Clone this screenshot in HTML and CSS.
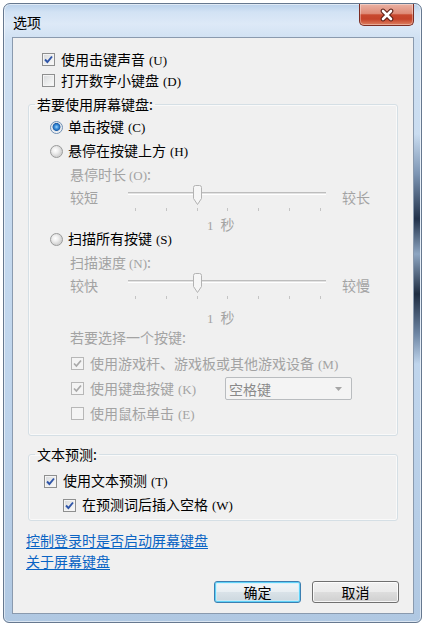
FILE: index.html
```html
<!DOCTYPE html>
<html lang="zh-CN">
<head>
<meta charset="utf-8">
<title>选项</title>
<link rel="stylesheet" href="styles.css">
</head>
<body>
<div class="window">
  <div class="titlebar">
    <span class="title">选项</span>
    <button class="close" aria-label="关闭">
      <svg width="16" height="14" viewBox="0 0 16 14"><path d="M4 3 L12 11 M12 3 L4 11" stroke="#5a1d14" stroke-width="4.6" stroke-linecap="round"/><path d="M4 3 L12 11 M12 3 L4 11" stroke="#ffffff" stroke-width="2.6" stroke-linecap="round"/></svg>
    </button>
  </div>
  <div class="client">
    <div class="top-opts">
      <div class="row r21"><span class="cb"><svg width="11" height="11" viewBox="0 0 11 11"><path d="M2 5.5 L4.4 8 L9 2.5" fill="none" stroke="#2f55a8" stroke-width="1.9"/></svg></span><span class="lbl">使用击键声音<span class="key">(U)</span></span></div>
      <div class="row r21"><span class="cb"></span><span class="lbl">打开数字小键盘<span class="key">(D)</span></span></div>
    </div>

    <fieldset class="group g1">
      <legend>若要使用屏幕键盘:</legend>
      <div class="gbody">
        <div class="row r24"><span class="radio on"></span><span class="lbl">单击按键<span class="key">(C)</span></span></div>
        <div class="row r24"><span class="radio"></span><span class="lbl">悬停在按键上方<span class="key">(H)</span></span></div>
        <div class="sub dis lbl1">悬停时长<span class="key">(O)</span>:</div>
        <div class="sub slider dis">
          <span class="s-end">较短</span>
          <div class="s-track">
            <div class="groove"></div>
            <div class="ticks"><i></i><i></i><i></i><i></i><i></i><i></i><i></i></div>
            <svg class="thumb" width="11" height="21" viewBox="0 0 11 21"><path d="M1.5 2.5 Q1.5 0.5 3.5 0.5 H7.5 Q9.5 0.5 9.5 2.5 V13.5 L5.5 19.5 L1.5 13.5 Z" fill="#f6f6f6" stroke="#b3b3b3"/></svg>
          </div>
          <span class="s-end right">较长</span>
        </div>
        <div class="val val1 dis"><span class="num">1</span>秒</div>
        <div class="row r3"><span class="radio"></span><span class="lbl">扫描所有按键<span class="key">(S)</span></span></div>
        <div class="sub dis lbl2">扫描速度<span class="key">(N)</span>:</div>
        <div class="sub slider dis">
          <span class="s-end">较快</span>
          <div class="s-track">
            <div class="groove"></div>
            <div class="ticks"><i></i><i></i><i></i><i></i><i></i><i></i><i></i></div>
            <svg class="thumb" width="11" height="21" viewBox="0 0 11 21"><path d="M1.5 2.5 Q1.5 0.5 3.5 0.5 H7.5 Q9.5 0.5 9.5 2.5 V13.5 L5.5 19.5 L1.5 13.5 Z" fill="#f6f6f6" stroke="#b3b3b3"/></svg>
          </div>
          <span class="s-end right">较慢</span>
        </div>
        <div class="val val2 dis"><span class="num">1</span>秒</div>
        <div class="sub dis lbl3">若要选择一个按键:</div>
        <div class="cblist">
          <div class="row r25 dis"><span class="cb off"><svg width="11" height="11" viewBox="0 0 11 11"><path d="M2 5.5 L4.4 8 L9 2.5" fill="none" stroke="#a9a9a9" stroke-width="1.7"/></svg></span><span class="lbl">使用游戏杆、游戏板或其他游戏设备<span class="key">(M)</span></span></div>
          <div class="row r25 dis"><span class="cb off"><svg width="11" height="11" viewBox="0 0 11 11"><path d="M2 5.5 L4.4 8 L9 2.5" fill="none" stroke="#a9a9a9" stroke-width="1.7"/></svg></span><span class="lbl kbd">使用键盘按键<span class="key">(K)</span></span>
            <div class="combo"><span>空格键</span><svg width="7" height="4" viewBox="0 0 7 4"><path d="M0 0 H7 L3.5 4 Z" fill="#a6a6a6"/></svg></div>
          </div>
          <div class="row r25 dis"><span class="cb off"></span><span class="lbl">使用鼠标单击<span class="key">(E)</span></span></div>
        </div>
      </div>
    </fieldset>

    <fieldset class="group g2">
      <legend>文本预测:</legend>
      <div class="gbody2">
        <div class="row r24"><span class="cb"><svg width="11" height="11" viewBox="0 0 11 11"><path d="M2 5.5 L4.4 8 L9 2.5" fill="none" stroke="#2f55a8" stroke-width="1.9"/></svg></span><span class="lbl">使用文本预测<span class="key">(T)</span></span></div>
        <div class="row r24 indent"><span class="cb"><svg width="11" height="11" viewBox="0 0 11 11"><path d="M2 5.5 L4.4 8 L9 2.5" fill="none" stroke="#2f55a8" stroke-width="1.9"/></svg></span><span class="lbl">在预测词后插入空格<span class="key">(W)</span></span></div>
      </div>
    </fieldset>

    <div class="links">
      <a href="#" class="l1">控制登录时是否启动屏幕键盘</a>
      <a href="#" class="l2">关于屏幕键盘</a>
    </div>

    <div class="buttons">
      <button class="btn default">确定</button>
      <button class="btn">取消</button>
    </div>
  </div>
</div>
</body>
</html>
```

FILE: styles.css
```css
html, body {
  margin: 0;
  padding: 0;
  background: #ffffff;
}

body {
  font-family: "Noto Sans CJK SC", "Noto Sans", sans-serif;
  font-size: 14px;
  color: #000;
}

.window {
  margin: 3px 0 0 3px;
  width: 419px;
  height: 620px;
  box-sizing: border-box;
  border: 1px solid #66788f;
  border-radius: 7px 7px 6px 6px;
  padding: 0 7px 8px 8px;
  display: flex;
  flex-direction: column;
  box-shadow: inset 0 0 0 1px rgba(255, 255, 255, 0.55);
  background:
    linear-gradient(180deg, rgba(0,0,0,0) 0, rgba(0,0,0,0) 130px, #7d95b3 170px, #22324a 215px, #8ea6c2 250px, #1e2c40 290px, #6e86a4 330px, rgba(0,0,0,0) 360px) right 1px top 0 / 6px 100% no-repeat,
    linear-gradient(180deg, #b8d0ea 0, #d2e2f4 8px, #dde9f7 20px, #cfe0f2 36px, #c6daef 200px, #bdd3eb 420px, #b0c8e2 100%);
}

.titlebar {
  height: 33px;
  flex: none;
  display: flex;
  justify-content: space-between;
  align-items: flex-start;
}

.title {
  margin: 8px 0 0 1px;
  line-height: 20px;
  font-size: 14px;
  color: #000;
}

.close {
  width: 55px;
  height: 22px;
  margin: 0 0 0 0;
  padding: 0;
  border: 1px solid #7c2c22;
  border-top: none;
  border-radius: 0 0 5px 5px;
  display: flex;
  align-items: center;
  justify-content: center;
  background: linear-gradient(180deg, #eab1a3 0%, #df8c78 45%, #c8492f 52%, #c5432a 72%, #de8161 100%);
  box-shadow: inset 0 0 0 1px rgba(255, 255, 255, 0.35);
}

.client {
  flex: 1;
  border: 1px solid #8a9aae;
  background: #f0f0f0;
  display: flex;
  flex-direction: column;
}

.row {
  display: flex;
  align-items: center;
}

.r21 { height: 21px; }
.r24 { height: 24px; }
.r25 { height: 25px; }
.r3 { height: 12px; }

.lbl {
  line-height: 18px;
  white-space: nowrap;
}

.key {
  font-family: "Liberation Serif", serif;
  font-size: 13px;
  margin-left: 4px;
}

.dis { color: #a3a3a3; }

.top-opts {
  padding: 11px 0 0 29px;
}

/* checkbox */
.cb {
  width: 13px;
  height: 13px;
  box-sizing: border-box;
  flex: none;
  margin-right: 6px;
  border: 1px solid #8e8f8f;
  background: linear-gradient(135deg, #d6d8db 0%, #eceded 55%, #fbfbfb 100%);
  box-shadow: inset 0 0 0 1px #f4f4f4;
  display: flex;
  align-items: center;
  justify-content: center;
}

.cb svg { display: block; }

.cb.off {
  border-color: #b7b7b7;
  background: #f4f4f4;
  box-shadow: none;
}

/* radio */
.radio {
  width: 13px;
  height: 13px;
  box-sizing: border-box;
  flex: none;
  margin-right: 5px;
  border-radius: 50%;
  border: 1px solid #9a9b9b;
  background: radial-gradient(circle at 40% 40%, #ffffff 0, #eeeeee 3px, #d4d4d4 6px);
}

.radio.on {
  border-color: #6f8fb3;
  background: radial-gradient(circle at 50% 45%, #9fd4fa 0, #3b8fdb 2px, #1c5fab 3.6px, #dfe3e8 4.3px, #f7f7f7 6px);
}

/* group boxes */
.group {
  margin: 3px 15px 0;
  padding: 1px 0 9px 6px;
  border: 1px solid #d5dfe5;
  border-radius: 3px;
  min-inline-size: 0;
  box-shadow: inset 0 0 0 1px rgba(255, 255, 255, 0.6);
}

.group legend {
  padding: 0 2px;
  line-height: 20px;
  font-size: 14px;
}

.gbody {
  padding-left: 15px;
}

.sub {
  padding-left: 20px;
}

.lbl1 {
  height: 22px;
  line-height: 22px;
}

.lbl2 {
  height: 28px;
  box-sizing: border-box;
  padding-top: 6px;
  line-height: 22px;
}

.lbl3 {
  height: 12px;
  line-height: 12px;
}

.lbl1 .key, .lbl2 .key { margin-left: 3px; }

/* slider */
.slider {
  display: flex;
  height: 30px;
}

.s-end {
  width: 58px;
  line-height: 24px;
  flex: none;
}

.s-end.right {
  width: auto;
  margin-left: 16px;
}

.s-track {
  position: relative;
  width: 198px;
  height: 30px;
  flex: none;
}

.groove {
  margin-top: 7px;
  height: 3px;
  box-sizing: border-box;
  border-top: 1px solid #bdbdbd;
  border-bottom: 1px solid #ffffff;
  background: #e2e2e2;
}

.ticks {
  margin-top: 13px;
  height: 3px;
  display: flex;
  justify-content: space-between;
  padding: 0 5px 0 7px;
}

.ticks i {
  width: 1px;
  height: 3px;
  background: #c4c4c4;
}

.thumb {
  position: absolute;
  left: 64px;
  top: 0;
  display: block;
}

.val {
  padding-left: 157px;
  font-size: 14px;
}

.val .num {
  font-family: "Liberation Serif", serif;
  font-size: 13px;
  margin-right: 7px;
}

.val1 {
  height: 18px;
  line-height: 18px;
}

.val2 {
  height: 28px;
  line-height: 28px;
}

.cblist {
  padding: 8px 0 0 21px;
}

.kbd {
  width: 135px;
  flex: none;
}

.combo {
  width: 127px;
  height: 23px;
  box-sizing: border-box;
  border: 1px solid #b9bcbf;
  border-radius: 2px;
  background: #f4f4f4;
  display: flex;
  align-items: center;
  justify-content: space-between;
  padding: 0 9px 0 3px;
  color: #8a8a8a;
  line-height: 18px;
}

.combo svg { display: block; }

.g2 {
  margin-top: 8px;
  padding: 5px 0 3px 6px;
}

.g2 legend { margin-top: 0; }

.gbody2 {
  padding-left: 9px;
}

.gbody2 .indent {
  padding-left: 19px;
}

.g2 .r24:first-child .cb { margin-right: 6px; }

/* links */
.links {
  margin-top: 9px;
  padding-left: 13px;
  display: flex;
  flex-direction: column;
  align-items: flex-start;
}

.links a {
  color: #0a64c4;
  text-decoration: underline;
  text-underline-offset: 2px;
}

.l1 { height: 21px; line-height: 21px; }
.l2 { height: 20px; line-height: 20px; }

/* buttons */
.buttons {
  margin-top: 10px;
  padding-right: 14px;
  display: flex;
  justify-content: flex-end;
  gap: 11px;
}

.btn {
  width: 87px;
  height: 22px;
  padding: 0;
  font-family: "Noto Sans CJK SC", "Noto Sans", sans-serif;
  font-size: 14px;
  line-height: 18px;
  color: #000;
  border: 1px solid #707070;
  border-radius: 3px;
  background: linear-gradient(180deg, #f2f2f2 0%, #ebebeb 48%, #dddddd 52%, #cfcfcf 100%);
  box-shadow: inset 0 0 0 1px rgba(255, 255, 255, 0.8);
}

.btn.default {
  border-color: #3c7fb1;
  box-shadow: inset 0 0 0 1px #5fd2f8, inset 0 0 0 2px rgba(200, 240, 255, 0.6);
  background: linear-gradient(180deg, #f2f6f8 0%, #e8eef2 48%, #d9e2e8 52%, #ccd7de 100%);
}
```
